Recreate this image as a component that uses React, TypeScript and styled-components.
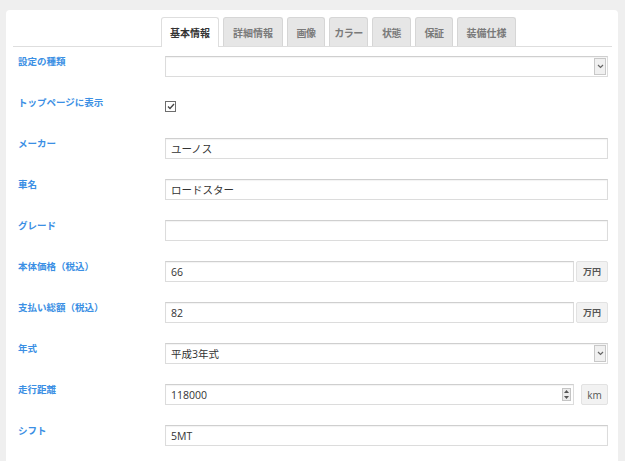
import React from 'react';
import styled, { createGlobalStyle } from 'styled-components';

const GlobalStyle = createGlobalStyle`
  html, body {
    margin: 0;
    padding: 0;
    background: #efefef;
    overflow: hidden;
  }
  body {
    font-family: "Open Sans", "Noto Sans CJK JP", sans-serif;
  }
`;

const Card = styled.div`
  margin: 10px 7px 0 6px;
  background: #ffffff;
  border-radius: 4px;
  padding: 7px 6px 0 7px;
  height: 460px;
  box-sizing: border-box;
`;

const TabBar = styled.div`
  display: flex;
  gap: 4px;
  padding-left: 148px;
  border-bottom: 1px solid #dedede;
  height: 29px;
`;

const Tab = styled.div<{ $active?: boolean; $w: number }>`
  width: ${(p) => p.$w}px;
  box-sizing: border-box;
  display: flex;
  align-items: center;
  justify-content: center;
  white-space: nowrap;
  font-family: "Noto Sans CJK JP", sans-serif;
  font-size: 10px;
  font-weight: 700;
  letter-spacing: ${(p) => (p.$w < 45 ? '-0.5px' : '0')};
  border: 1px solid ${(p) => (p.$active ? '#dedede' : '#d6d6d6')};
  border-bottom: none;
  border-radius: 3px 3px 0 0;
  background: ${(p) => (p.$active ? '#ffffff' : '#e6e6e6')};
  color: ${(p) => (p.$active ? '#333333' : '#7a7a7a')};
  height: ${(p) => (p.$active ? '30px' : '29px')};
  position: relative;
  z-index: ${(p) => (p.$active ? 1 : 0)};
`;

const Form = styled.div`
  padding: 9px 4px 0 5px;
`;

const Row = styled.div`
  display: grid;
  grid-template-columns: 147px 1fr;
  align-items: start;
  height: 21px;
  margin-bottom: 20px;
`;

const Label = styled.div`
  margin-top: -2px;
  font-family: "Noto Sans CJK JP", sans-serif;
  font-size: 9.5px;
  font-weight: 700;
  color: #3b8fe4;
`;

const Field = styled.div`
  display: flex;
  gap: 2px;
  height: 21px;
`;

const Box = styled.div`
  flex: 1;
  display: flex;
  align-items: center;
  height: 21px;
  box-sizing: border-box;
  border: 1px solid #dcdcdc;
  border-top-color: #cfcfcf;
  box-shadow: inset 0 1px 1px rgba(0, 0, 0, 0.05);
  background: #fff;
  padding: 0 1px 0 5px;
  font-size: 10.5px;
  color: #333;
`;

const Value = styled.span`
  flex: 1;
  font-family: "Open Sans", "Noto Sans CJK JP", sans-serif;
`;

const ArrowButton = styled.div`
  width: 12px;
  height: 17px;
  box-sizing: border-box;
  border: 1px solid #c8c8c8;
  background: #f0f0f0;
  display: flex;
  align-items: center;
  justify-content: center;
`;

const Spinner = styled.div`
  width: 9px;
  height: 13px;
  margin-right: 1px;
  box-sizing: border-box;
  border: 1px solid #c4c4c4;
  background: #ececec;
  display: flex;
  flex-direction: column;
  align-items: center;
  justify-content: space-around;
`;

const Addon = styled.div`
  width: 32px;
  height: 21px;
  box-sizing: border-box;
  border: 1px solid #e2e2e2;
  border-radius: 2px;
  background: #f2f2f2;
  display: flex;
  align-items: center;
  justify-content: center;
  font-family: "Noto Sans CJK JP", sans-serif;
  font-size: 9px;
  font-weight: 700;
  color: #555;
`;

const UnitAddon = styled(Addon)`
  width: 27px;
  margin-left: 5px;
  font-family: "Open Sans", sans-serif;
  font-weight: 400;
  font-size: 10px;
`;

const Check = styled.div`
  width: 11px;
  height: 11px;
  margin-top: 4px;
  box-sizing: border-box;
  border: 1px solid #6d6d6d;
  background: #fff;
  display: flex;
  align-items: center;
  justify-content: center;
`;

const Chevron = () => (
  <svg width="7" height="5" viewBox="0 0 7 5">
    <path d="M1 1 L3.5 3.5 L6 1" fill="none" stroke="#666" strokeWidth="1.2" />
  </svg>
);

const tabs = [
  { label: '基本情報', w: 58 },
  { label: '詳細情報', w: 60 },
  { label: '画像', w: 38 },
  { label: 'カラー', w: 39 },
  { label: '状態', w: 39 },
  { label: '保証', w: 38 },
  { label: '装備仕様', w: 59 },
];

const TextField = ({ value }: { value?: string }) => (
  <Field>
    <Box>
      <Value>{value}</Value>
    </Box>
  </Field>
);

const PriceField = ({ value }: { value: string }) => (
  <Field>
    <Box>
      <Value>{value}</Value>
    </Box>
    <Addon>万円</Addon>
  </Field>
);

const SelectField = ({ value }: { value?: string }) => (
  <Field>
    <Box>
      <Value>{value}</Value>
      <ArrowButton>
        <Chevron />
      </ArrowButton>
    </Box>
  </Field>
);

const App = () => (
  <>
    <GlobalStyle />
    <Card>
      <TabBar>
        {tabs.map((t, i) => (
          <Tab key={t.label} $w={t.w} $active={i === 0}>
            {t.label}
          </Tab>
        ))}
      </TabBar>
      <Form>
        <Row>
          <Label>設定の種類</Label>
          <SelectField />
        </Row>
        <Row>
          <Label>トップページに表示</Label>
          <div>
            <Check>
              <svg width="8" height="7" viewBox="0 0 8 7">
                <path d="M1 3.5 L3 5.5 L7 1" fill="none" stroke="#444" strokeWidth="1.3" />
              </svg>
            </Check>
          </div>
        </Row>
        <Row>
          <Label>メーカー</Label>
          <TextField value="ユーノス" />
        </Row>
        <Row>
          <Label>車名</Label>
          <TextField value="ロードスター" />
        </Row>
        <Row>
          <Label>グレード</Label>
          <TextField />
        </Row>
        <Row>
          <Label>本体価格（税込）</Label>
          <PriceField value="66" />
        </Row>
        <Row>
          <Label>支払い総額（税込）</Label>
          <PriceField value="82" />
        </Row>
        <Row>
          <Label>年式</Label>
          <SelectField value="平成3年式" />
        </Row>
        <Row>
          <Label>走行距離</Label>
          <Field>
            <Box>
              <Value>118000</Value>
              <Spinner>
                <svg width="5" height="3" viewBox="0 0 5 3">
                  <path d="M0 3 L2.5 0 L5 3 Z" fill="#555" />
                </svg>
                <svg width="5" height="3" viewBox="0 0 5 3">
                  <path d="M0 0 L2.5 3 L5 0 Z" fill="#555" />
                </svg>
              </Spinner>
            </Box>
            <UnitAddon>km</UnitAddon>
          </Field>
        </Row>
        <Row>
          <Label>シフト</Label>
          <TextField value="5MT" />
        </Row>
      </Form>
    </Card>
  </>
);

export default App;
